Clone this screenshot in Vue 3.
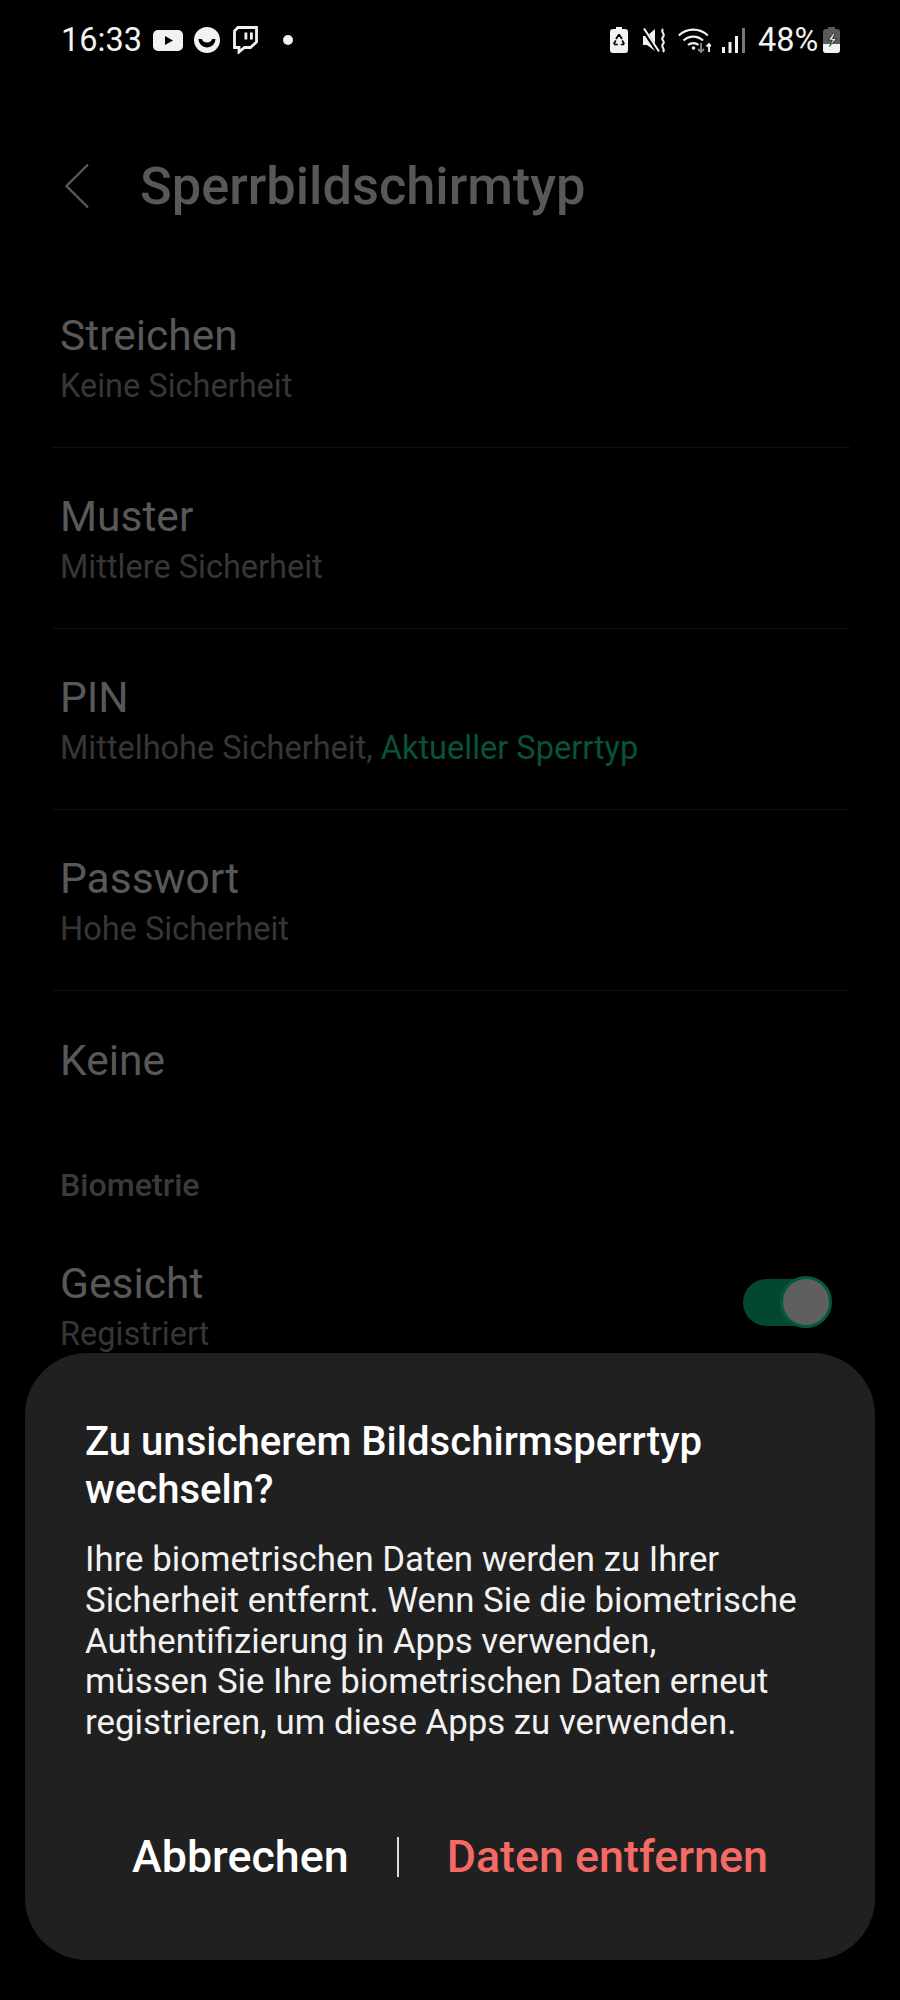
<script setup>
const options = [
  { title: 'Streichen', sub: 'Keine Sicherheit' },
  { title: 'Muster', sub: 'Mittlere Sicherheit' },
  { title: 'PIN', sub: 'Mittelhohe Sicherheit, ', current: 'Aktueller Sperrtyp' },
  { title: 'Passwort', sub: 'Hohe Sicherheit' },
]
</script>

<template>
  <div class="screen">
    <div class="status">
      <span class="time">16:33</span>
      <svg class="ic-yt" width="30" height="21" viewBox="0 0 30 21">
        <rect width="30" height="21" rx="5" fill="#f2f2f2" />
        <path d="M12 6l8 4.500-8 4.500z" fill="#000" />
      </svg>
      <svg class="ic-smile" width="26" height="26" viewBox="0 0 26 26">
        <circle cx="13" cy="13" r="13" fill="#f2f2f2" />
        <path d="M4.500 12a8.500 8.500 0 0 0 17 0l-3.500 0a5 3.500 0 0 1-10 0z" fill="#000" />
      </svg>
      <svg class="ic-twitch" width="25" height="28" viewBox="0 0 25 28">
        <path d="M1.500 5L5 1.500h18.500v14.500l-6 5.500h-6l-5.500 4.500v-4.500H1.500z" fill="none" stroke="#f2f2f2" stroke-width="2.800" />
        <path d="M11.500 6.500h2.800v7h-2.800zM17 6.500h2.800v7H17z" fill="#f2f2f2" />
      </svg>
      <span class="dot"></span>

      <span class="status-right">
        <svg width="18" height="26" viewBox="0 0 18 26">
          <path d="M6 0h6v2h3a3 3 0 0 1 3 3v18a3 3 0 0 1-3 3H3a3 3 0 0 1-3-3V5a3 3 0 0 1 3-3h3z" fill="#f2f2f2" />
          <path d="M9 7.500l3 4.500M9 7.500l-3 4.500M3.800 17l2-3.500M3.800 17.500h4M14.200 17l-2-3.500M14.200 17.500h-3.500" stroke="#000" stroke-width="1.700" fill="none" />
        </svg>
        <svg class="ic-mute" width="25" height="25" viewBox="0 0 25 25">
          <path d="M1 8h4l8-7v22l-8-6H1z" fill="#f2f2f2" />
          <path d="M1 1l15 23" stroke="#000" stroke-width="4" />
          <path d="M2 0.500l15 23" stroke="#f2f2f2" stroke-width="2" />
          <path d="M21 1c-3 3 3 5 0 8s3 4 0 7 3 5 0 8" stroke="#f2f2f2" stroke-width="2" fill="none" />
        </svg>
        <svg class="ic-wifi" width="33" height="26" viewBox="0 0 33 26">
          <path d="M0.800 8.500a21 21 0 0 1 29 0M5.500 13.500a14 14 0 0 1 19.500 0M10 18a8 8 0 0 1 10.500 0" stroke="#f2f2f2" stroke-width="2.200" fill="none" />
          <circle cx="15.500" cy="21" r="1.800" fill="#f2f2f2" />
          <path d="M23 16v9M20 22l3 3 3-3" stroke="#8a8a8a" stroke-width="1.800" fill="none" />
          <path d="M31 25v-8M28.500 19.500l2.500-2.500 2.500 2.500" stroke="#f2f2f2" stroke-width="1.800" fill="none" />
        </svg>
        <svg class="ic-signal" width="23" height="25" viewBox="0 0 23 25">
          <rect x="0" y="19" width="3" height="6" fill="#f2f2f2" />
          <rect x="6.500" y="14" width="3" height="11" fill="#f2f2f2" />
          <rect x="13" y="8" width="3" height="17" fill="#f2f2f2" />
          <rect x="20" y="0" width="3" height="25" fill="#777" />
        </svg>
        <span class="pct">48%</span>
        <svg width="17" height="26" viewBox="0 0 17 26">
          <path d="M5 0h7v2h2a3 3 0 0 1 3 3v18a3 3 0 0 1-3 3H3a3 3 0 0 1-3-3V5a3 3 0 0 1 3-3h2z" fill="#5a5a5a" />
          <path d="M0 17h17v6a3 3 0 0 1-3 3H3a3 3 0 0 1-3-3z" fill="#f2f2f2" />
          <path d="M10.500 6l-5 7h4l-3 6.500 7-8h-4l2.500-5.500z" fill="#f2f2f2" stroke="#000" stroke-width="0.600" />
        </svg>
      </span>
    </div>

    <header class="bar">
      <svg class="back" width="26" height="46" viewBox="0 0 26 46">
        <path d="M24 1.500L2.500 23 24 44.500" fill="none" stroke="#585858" stroke-width="2.400" />
      </svg>
      <h1>Sperrbildschirmtyp</h1>
    </header>

    <ul class="list">
      <li v-for="o in options" :key="o.title" class="row">
        <div class="title">{{ o.title }}</div>
        <div class="sub">{{ o.sub }}<span v-if="o.current" class="current">{{ o.current }}</span></div>
      </li>
      <li class="row-single"><div class="title">Keine</div></li>
    </ul>

    <div class="section">Biometrie</div>

    <div class="bio">
      <div>
        <div class="title">Gesicht</div>
        <div class="sub">Registriert</div>
      </div>
      <span class="switch"><span class="knob"></span></span>
    </div>

    <div class="dialog">
      <h2>Zu unsicherem Bildschirmsperrtyp<br />wechseln?</h2>
      <p>
        Ihre biometrischen Daten werden zu Ihrer<br />
        Sicherheit entfernt. Wenn Sie die biometrische<br />
        Authentifizierung in Apps verwenden,<br />
        müssen Sie Ihre biometrischen Daten erneut<br />
        registrieren, um diese Apps zu verwenden.
      </p>
      <div class="actions">
        <button class="cancel">Abbrechen</button>
        <span class="sep"></span>
        <button class="remove">Daten entfernen</button>
      </div>
    </div>
  </div>
</template>

<style>
html,
body {
  margin: 0;
  background: #000;
}
</style>

<style scoped>
.screen {
  position: relative;
  width: 900px;
  height: 2000px;
  overflow: hidden;
  background: #000;
  font-family: Roboto, sans-serif;
  color: #585858;
}
.status {
  display: flex;
  align-items: center;
  height: 26px;
  padding: 27px 60px 0 61px;
  color: #f2f2f2;
}
.time {
  font-size: 32.500px;
  width: 92px;
}
.ic-smile {
  margin-left: 11px;
}
.ic-twitch {
  margin-left: 13px;
}
.dot {
  width: 10px;
  height: 10px;
  margin-left: 25px;
  border-radius: 50%;
  background: #f2f2f2;
}
.status-right {
  display: flex;
  align-items: center;
  margin-left: auto;
}
.ic-mute {
  margin-left: 14px;
}
.ic-wifi {
  margin-left: 11px;
}
.ic-signal {
  margin-left: 11px;
}
.pct {
  font-size: 32.500px;
  margin-left: 13px;
  width: 65px;
}
.bar {
  display: flex;
  align-items: center;
  height: 60px;
  margin-top: 103px;
  padding-left: 64px;
}
.bar h1 {
  margin: 0 0 0 50px;
  font-size: 52.400px;
  font-weight: 500;
}
.list {
  list-style: none;
  margin: 51px 50px 0 52px;
  padding: 0;
}
.row {
  height: 177px;
  padding: 3px 8px 0;
  border-bottom: 1px solid #111;
  display: flex;
  flex-direction: column;
  justify-content: center;
}
.row-single {
  height: 139px;
  padding: 0 8px;
  display: flex;
  align-items: center;
}
.title {
  font-size: 42.500px;
  line-height: 50px;
  color: #585858;
}
.sub {
  font-size: 32.500px;
  line-height: 40px;
  margin-top: 5px;
  color: #363636;
}
.current {
  color: #08523a;
}
.section {
  margin: 35px 60px 0;
  font-size: 32.200px;
  line-height: 40px;
  font-weight: 500;
  color: #3a3a3a;
}
.bio {
  display: flex;
  justify-content: space-between;
  align-items: center;
  margin: 54px 71px 0 60px;
}
.switch {
  position: relative;
  display: block;
  width: 86px;
  height: 47px;
  margin-bottom: 9px;
  border-radius: 24px;
  background: #03472f;
}
.knob {
  position: absolute;
  top: -3px;
  right: -3px;
  width: 46px;
  height: 46px;
  border: 3px solid #05583b;
  border-radius: 50%;
  background: #5f5f5f;
}
.dialog {
  position: absolute;
  left: 25px;
  top: 1353px;
  width: 850px;
  height: 607px;
  box-sizing: border-box;
  padding: 65px 60px 0;
  border-radius: 62px;
  background: #202020;
  color: #fff;
}
.dialog h2 {
  margin: 0;
  font-size: 40.100px;
  line-height: 47.500px;
  font-weight: 500;
}
.dialog p {
  margin: 26px 0 0;
  font-size: 34.800px;
  line-height: 40.800px;
  color: #f2f2f2;
}
.actions {
  display: flex;
  align-items: center;
  margin-top: 89px;
}
.actions button {
  padding: 0;
  border: 0;
  background: none;
  font-family: inherit;
  font-size: 44.800px;
  font-weight: 500;
  line-height: 50px;
}
.cancel {
  margin-left: 47px;
  color: #fff;
}
.sep {
  width: 2px;
  height: 40px;
  margin: 0 48px;
  background: #ddd;
}
.remove {
  color: #f56a65;
}
</style>
